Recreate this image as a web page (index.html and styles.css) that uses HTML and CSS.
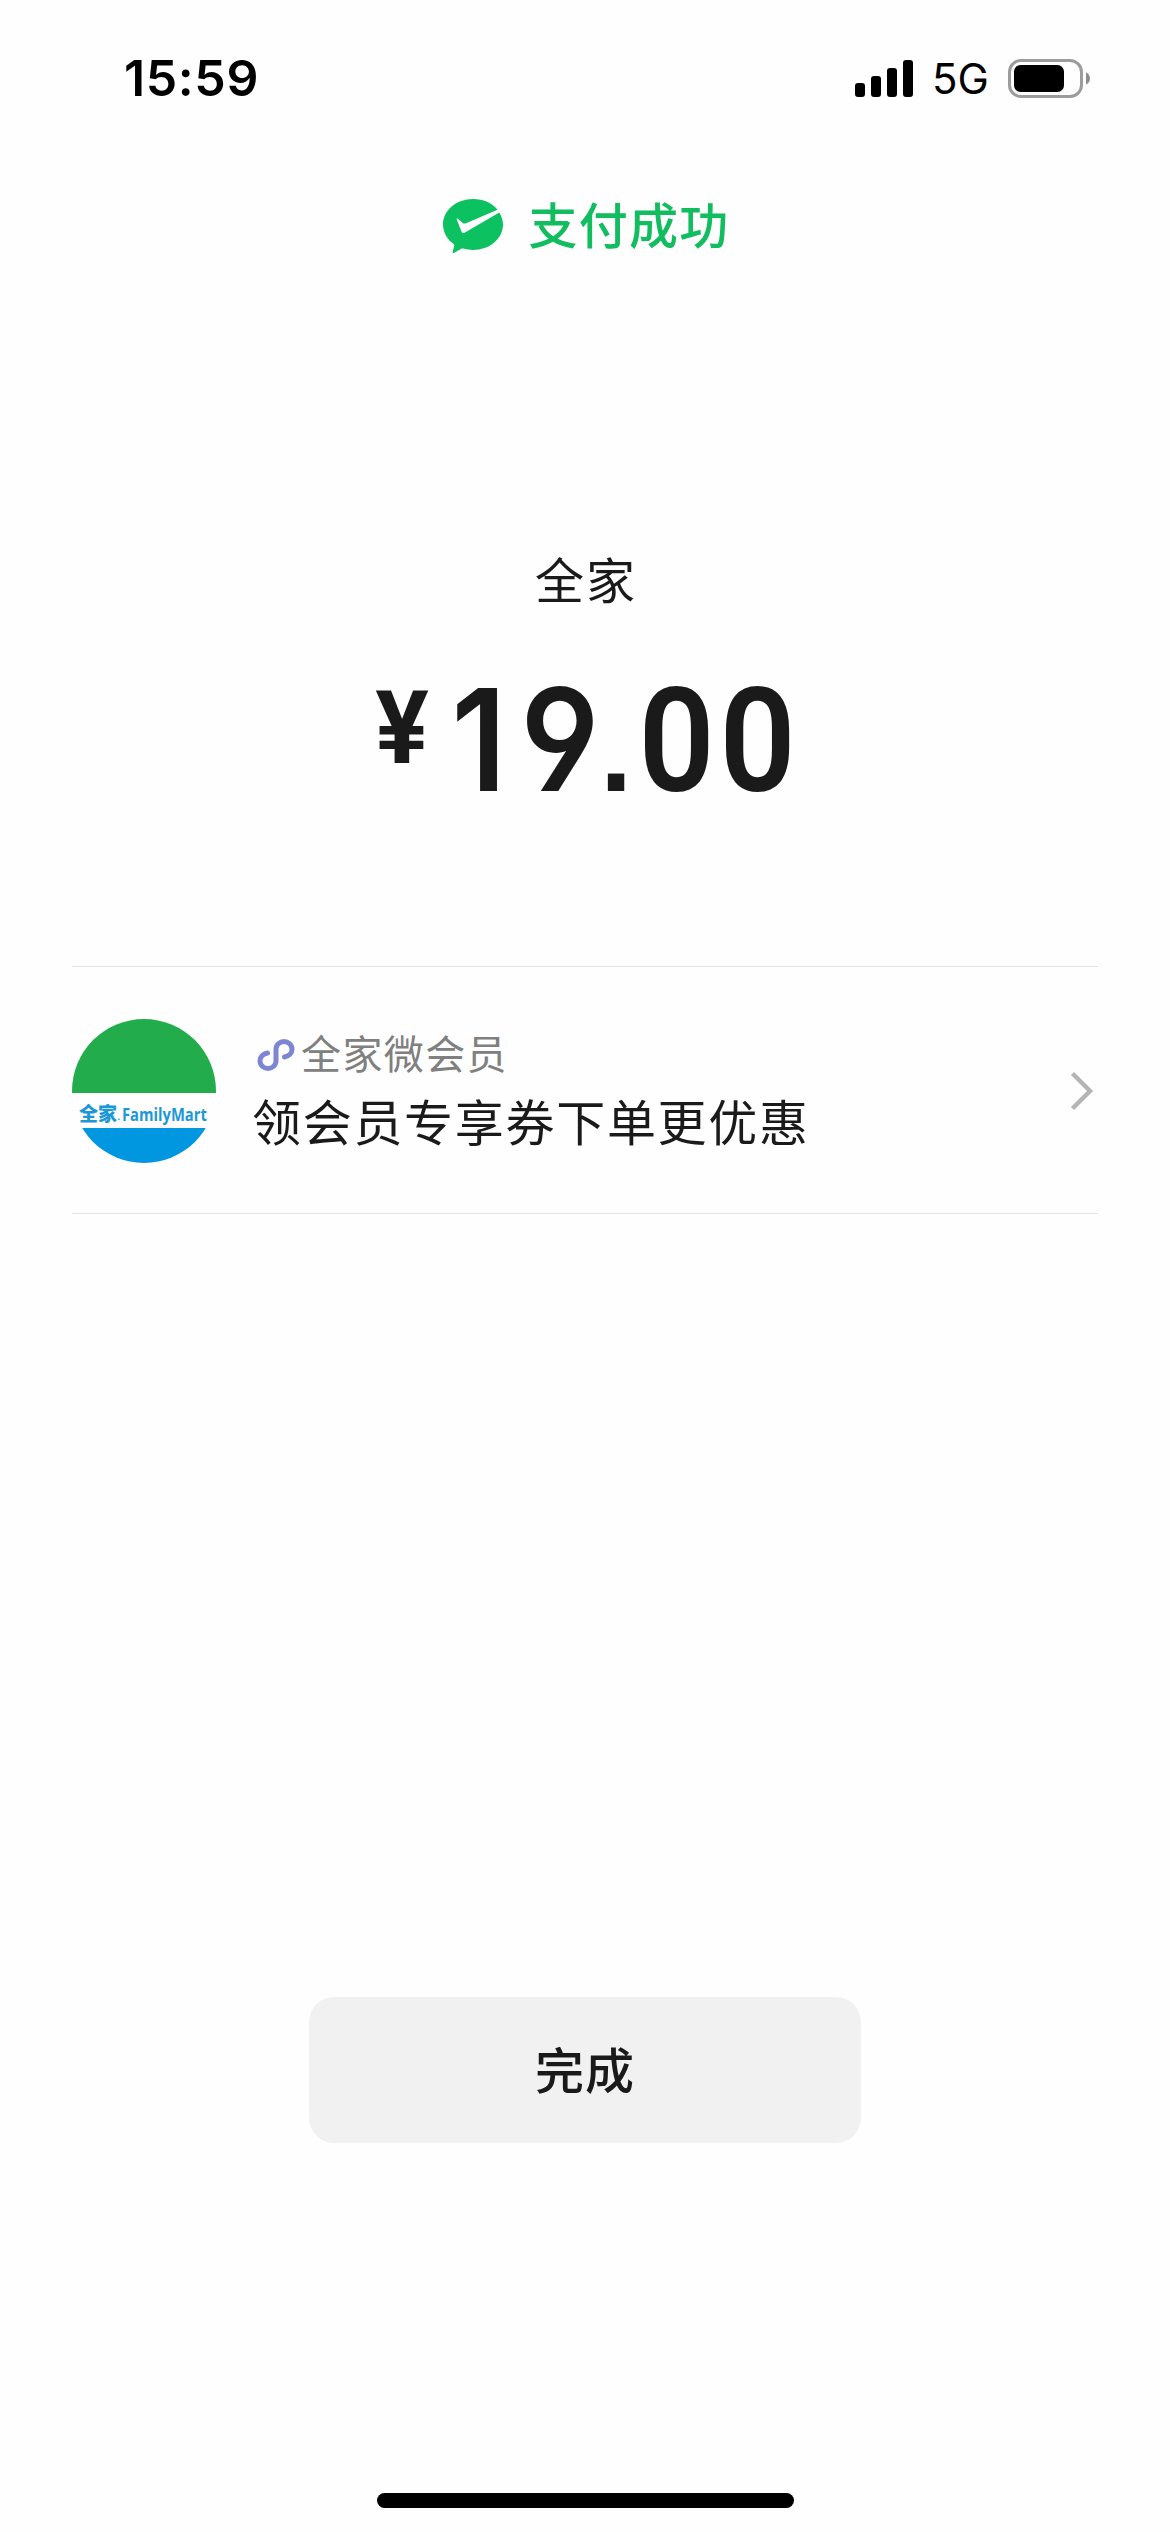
FILE: index.html
```html
<!DOCTYPE html>
<html lang="zh-CN">
<head>
<meta charset="utf-8">
<title>支付成功</title>
<link rel="stylesheet" href="styles.css">
</head>
<body>
<main class="screen">
  <header class="status-bar">
    <span class="time">15:59</span>
    <div class="status-right">
      <svg class="signal" viewBox="0 0 58 37" aria-hidden="true">
        <rect x="0" y="23" width="10" height="14" rx="3"/>
        <rect x="16" y="16" width="10" height="21" rx="3"/>
        <rect x="32" y="8" width="10" height="29" rx="3"/>
        <rect x="48" y="0" width="10" height="37" rx="3"/>
      </svg>
      <span class="network">5G</span>
      <svg class="battery" viewBox="0 0 83 39" aria-hidden="true">
        <rect x="1.5" y="1.5" width="72" height="36" rx="11.5" fill="none" stroke="#9c9c9c" stroke-width="3"/>
        <rect x="6" y="6" width="50" height="27" rx="6.5" fill="#000"/>
        <path d="M78 13.5c5.300 2 5.300 10 0 12z" fill="#8c8c8c"/>
      </svg>
    </div>
  </header>

  <div class="result">
    <svg class="pay-icon" viewBox="0 0 60 54" aria-hidden="true">
      <path fill="#0cc160" d="M54.500 10.800L23 24.300c-1.200.5-2.200.4-3.200-.3l-5-4.300c-.8-.5-1.400-.1-1.100.8l4.900 12.300c.5 1.200 1.800 1.600 2.900.9L56.300 13.500C58.800 18 60 21.500 60 25.500 60 39.600 46.600 51 30 51c-3.400 0-6.700-.5-9.700-1.400-.9-.3-1.700-.2-2.500.3L11.300 53.700c-1 .6-1.900 0-1.600-1.100l1.500-5.700c.2-.9 0-1.500-.7-2.100C4 40.100 0 33.200 0 25.500 0 11.400 13.400 0 30 0c10.200 0 19.200 3.800 24.500 10.800z"/>
    </svg>
    <span class="result-text">支付成功</span>
  </div>

  <section class="payment">
    <div class="merchant">全家</div>
    <div class="amount">
      <span class="yen">¥</span>
      <div class="digits"><span class="one">1</span><span class="nine">9</span><span class="point">.</span><span class="zero">0</span><span class="zero">0</span></div>
    </div>
  </section>

  <a class="promo">
    <div class="logo">
      <div class="logo-top"></div>
      <div class="logo-name"><span class="logo-cn">全家</span><span class="logo-dot">.</span><span class="logo-en">FamilyMart</span><span class="logo-dot">.</span></div>
      <div class="logo-bottom"></div>
    </div>
    <div class="promo-body">
      <div class="promo-source">
        <svg class="mini-icon" viewBox="0 0 38 34" aria-hidden="true">
          <path d="M10.500 15C6 16 3 19 3 22.800 3 27.200 6.600 30.500 11 30.500s8-3.300 8-7.700V11.200C19 6.800 22.600 3.500 27 3.500s8 3.300 8 7.700c0 3.800-3 6.800-7.500 7.800" fill="none" stroke="#7d86d3" stroke-width="5" stroke-linecap="round"/>
        </svg>
        <span>全家微会员</span>
      </div>
      <div class="promo-title">领会员专享券下单更优惠</div>
    </div>
    <svg class="chevron" viewBox="0 0 24 40" aria-hidden="true">
      <path d="M2.500 2.500L20 20 2.500 37.500" fill="none" stroke="#b5b5b5" stroke-width="4.500"/>
    </svg>
  </a>

  <button class="done" type="button">完成</button>
  <div class="home-indicator"></div>
</main>
</body>
</html>
```
FILE: styles.css
```css
* { box-sizing: border-box; }

body {
  margin: 0;
  background: #fefefe;
  font-family: "Inter", "Noto Sans CJK SC", sans-serif;
  color: #1a1a1a;
}

.screen {
  width: 1170px;
  height: 2532px;
  display: flex;
  flex-direction: column;
  align-items: center;
  overflow: hidden;
}

.status-bar {
  width: 100%;
  height: 156px;
  padding: 0 79px 0 124px;
  display: flex;
  justify-content: space-between;
  align-items: center;
  color: #000;
}

.time {
  font-size: 50px;
  font-weight: 600;
  line-height: 60px;
  letter-spacing: 0.6px;
}

.status-right {
  display: flex;
  align-items: center;
}

.signal { width: 58px; height: 37px; }

.network {
  width: 95px;
  padding: 2px 0 0 19px;
  font-size: 42px;
  line-height: 50px;
}

.battery { width: 83px; height: 39px; }

.result {
  height: 76px;
  margin-top: 32px;
  padding-left: 3px;
  display: flex;
  align-items: center;
  gap: 25px;
}

.pay-icon { width: 60px; height: 54px; }

.result-text {
  padding-top: 2px;
  font-size: 49px;
  line-height: 76px;
  letter-spacing: 1.3px;
  font-weight: 500;
  color: #12bd60;
}

.payment {
  margin-top: 280px;
  display: flex;
  flex-direction: column;
  align-items: center;
}

.merchant {
  padding-left: 2px;
  font-size: 49px;
  line-height: 76px;
  letter-spacing: 2px;
}

.amount {
  margin-top: 29px;
  height: 180px;
  display: flex;
  align-items: flex-start;
}

.yen {
  width: 58px;
  margin-right: 3px;
  padding-top: 19px;
  display: flex;
  justify-content: center;
  font: 700 102px/120px "Roboto", sans-serif;
  transform: scaleX(0.98);
}

.digits {
  display: flex;
  align-items: baseline;
}

.digits span {
  display: flex;
  justify-content: center;
  line-height: 180px;
}

.digits .one,
.digits .nine {
  font: 600 142px/180px "Inter", sans-serif;
  font-feature-settings: "cv04";
}

.digits .one { width: 85px; padding-left: 5px; transform: scaleX(0.92); }
.digits .nine { width: 82px; transform: scaleX(0.92); }

.digits .point {
  width: 31px;
  margin-right: 4px;
  font: 700 116px/140px "Liberation Sans", sans-serif;
}

.digits .zero {
  width: 81px;
  font: 600 145px/180px "Roboto", sans-serif;
  transform: scaleX(0.92);
}

.promo {
  width: 1026px;
  height: 248px;
  margin-top: 137px;
  padding-top: 1px;
  border-top: 1px solid #e4e4e4;
  border-bottom: 1px solid #e4e4e4;
  display: flex;
  align-items: center;
}

.logo {
  width: 144px;
  height: 144px;
  border-radius: 50%;
  overflow: hidden;
  display: flex;
  flex-direction: column;
  flex: none;
}

.logo-top { height: 74px; background: #22ac4b; }
.logo-bottom { height: 35px; background: #0096e0; }

.logo-name {
  height: 35px;
  padding: 8px 0 0 7px;
  display: flex;
  align-items: center;
  color: #1c98d8;
  white-space: nowrap;
}

.logo-cn { font-size: 19px; line-height: 27px; font-weight: 900; }
.logo-dot { width: 5px; font-size: 12px; line-height: 27px; padding-top: 3px; }

.logo-en {
  width: 80px;
  font: 700 18px/27px "Open Sans", sans-serif;
  transform: scaleX(0.82);
  transform-origin: left;
}

.promo-body { margin-left: 36px; padding-top: 7px; flex: 1; }

.promo-source {
  display: flex;
  align-items: center;
  gap: 6px;
  padding-left: 5px;
  font-size: 40px;
  line-height: 60px;
  letter-spacing: 1.4px;
  color: #808080;
}

.mini-icon { width: 38px; height: 34px; }

.promo-title {
  font-size: 49px;
  line-height: 78px;
  letter-spacing: 1.7px;
}

.chevron { width: 24px; height: 40px; margin-right: 4px; }

.done {
  width: 552px;
  height: 146px;
  margin-top: 783px;
  padding: 0 0 5px;
  border: 0;
  border-radius: 25px;
  background: #f1f1f1;
  font: 500 49px/76px "Noto Sans CJK SC", sans-serif;
  letter-spacing: 1px;
  color: #1a1a1a;
}

.home-indicator {
  width: 417px;
  height: 15px;
  margin-top: 350px;
  border-radius: 8px;
  background: #000;
}
```
